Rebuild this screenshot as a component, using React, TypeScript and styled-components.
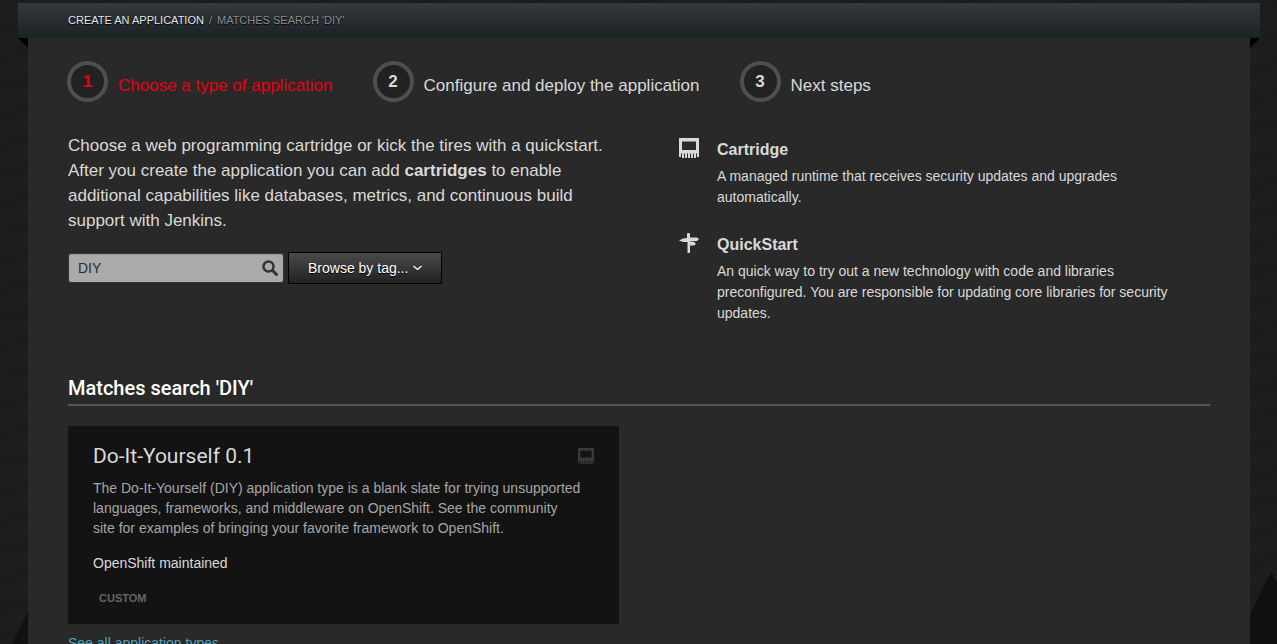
import React from "react";
import styled, { createGlobalStyle } from "styled-components";

const GlobalStyle = createGlobalStyle`
  *, *::before, *::after { box-sizing: border-box; }
  body {
    margin: 0;
    background: #1d1d1d;
    color: #d9d9d9;
    font-family: "Liberation Sans", Arial, sans-serif;
    font-size: 14px;
    line-height: 20px;
  }
  h1, h2, h3, p, ol, ul { margin: 0; padding: 0; }
  ol, ul { list-style: none; }
`;

const Page = styled.div`
  position: relative;
  min-height: 100vh;
  padding: 3px 17px 0 18px;
  background: repeating-linear-gradient(165deg, #1c1c1c 0, #1e1e1e 14px, #1c1c1c 28px);
`;

const Peak = styled.svg<{ $side: "left" | "right" }>`
  position: fixed;
  bottom: 0;
  ${(p) => p.$side}: 0;
`;

const TopBar = styled.header`
  position: relative;
  height: 35px;
  padding: 0 50px 2px;
  display: flex;
  align-items: center;
  background: linear-gradient(#33393c, #1b2224);

  &::before,
  &::after {
    content: "";
    position: absolute;
    top: 100%;
    border-top: 10px solid #000;
  }
  &::before { left: 0; border-left: 10px solid transparent; }
  &::after { right: 0; border-right: 10px solid transparent; }
`;

const Crumbs = styled.ol`
  display: flex;
  gap: 5px;
  font-size: 11px;
  text-transform: uppercase;
  text-shadow: 0 1px 1px #000;
  color: #8c8c8c;
`;

const CrumbLink = styled.a`
  color: #e6e6e6;
  text-decoration: none;
`;

const Panel = styled.main`
  position: relative;
  margin: 0 10px;
  min-height: calc(100vh - 38px);
  padding: 23px 40px 20px;
  background: #292929;
`;

const Steps = styled.ol`
  display: flex;
  gap: 40px;
  margin-left: -1px;
`;

const Step = styled.li<{ $active?: boolean }>`
  display: flex;
  align-items: center;
  gap: 10px;
  font-size: 17px;
  color: ${(p) => (p.$active ? "#e60012" : "#d9d9d9")};
`;

const StepNumber = styled.span`
  width: 41px;
  height: 41px;
  display: grid;
  place-items: center;
  border: 4px solid #4f4f4f;
  border-radius: 50%;
  background: #222;
  font-weight: bold;
`;

const StepLabel = styled.span`
  padding-top: 8px;
`;

const Columns = styled.div`
  display: grid;
  grid-template-columns: 1fr 1fr;
  gap: 40px;
`;

const IntroRow = styled(Columns)`
  padding-top: 31px;
`;

const Intro = styled.p`
  font-size: 17px;
  line-height: 25px;
`;

const Filters = styled.form`
  display: flex;
  align-items: center;
  gap: 4px;
  margin-top: 19px;
`;

const SearchBox = styled.div`
  display: flex;
  align-items: center;
  width: 216px;
  height: 30px;
  border: 1px solid #333;
  border-radius: 3px;
  background: #aaa;
  box-shadow: inset 0 1px 1px #999;
`;

const SearchInput = styled.input`
  flex: 1;
  min-width: 0;
  padding: 0 0 0 9px;
  border: 0;
  outline: 0;
  background: none;
  color: #2b2b2b;
  font: inherit;
`;

const SearchButton = styled.button`
  display: flex;
  padding: 0 5px;
  border: 0;
  background: none;
  color: #333;
`;

const TagButton = styled.button`
  display: flex;
  align-items: center;
  gap: 5px;
  height: 32px;
  padding: 0 19px;
  border: 1px solid #000;
  background: linear-gradient(#4a4a4a, #222);
  color: #fff;
  font: inherit;
  text-shadow: 0 1px 1px #000;
`;

const Kinds = styled.ul`
  padding: 5px 20px 0;
`;

const Kind = styled.li`
  display: flex;
  gap: 18px;
  margin-bottom: 25px;

  > svg { flex: none; }
`;

const KindName = styled.h2`
  margin-bottom: 4px;
  font-size: 16px;
  line-height: 24px;
`;

const KindText = styled.p`
  line-height: 21px;
`;

const SectionTitle = styled.h1`
  margin-top: 24px;
  padding-bottom: 1px;
  border-bottom: 2px solid #555;
  color: #fff;
  font-family: Roboto, sans-serif;
  font-size: 20px;
  font-weight: 500;
  line-height: 30px;
`;

const Results = styled(Columns)`
  margin-top: 20px;
`;

const Card = styled.article`
  padding: 16px 25px;
  background: #131313;
  color: #a6a6a6;
`;

const CardHead = styled.div`
  display: flex;
  align-items: center;
  justify-content: space-between;
  color: #393939;
`;

const CardTitle = styled.h2`
  color: #d9d9d9;
  font-family: Roboto, sans-serif;
  font-size: 21px;
  font-weight: 400;
  line-height: 28px;
`;

const CardText = styled.p`
  margin-top: 8px;
`;

const Maintainer = styled.p`
  margin-top: 15px;
  color: #d9d9d9;
`;

const Tag = styled.span`
  display: block;
  margin-top: 15px;
  padding-left: 6px;
  color: #666;
  font-size: 11px;
  font-weight: bold;
  text-transform: uppercase;
`;

const AllLink = styled.a`
  display: inline-block;
  margin-top: 9px;
  color: #54a3b8;
  text-decoration: none;
`;

const CartridgeIcon = ({ size }: { size: number }) => (
  <svg width={size} height={size} viewBox="0 0 20 20" fill="currentColor" aria-hidden="true">
    <path fillRule="evenodd" d="M0 0H20V19H18V15.500H17V20H15V15.500H14V20H12V15.500H11V20H9V15.500H8V20H6V15.500H5V20H3V15.500H2V19H0ZM3 3.500V12H17V3.500Z" />
  </svg>
);

const SignpostIcon = () => (
  <svg width="20" height="20" viewBox="0 0 20 20" fill="currentColor" aria-hidden="true">
    <path d="M8 0.500L9.500 0L11 0.500V4.500H18L20 6L18 8L11 8.500V9H15L17 11L15 12.500H11V20H8.500V9H4L0 7.500L4 5.500L8 5Z" />
  </svg>
);

const SearchIcon = () => (
  <svg width="16" height="16" viewBox="0 0 16 16" fill="none" stroke="currentColor" aria-hidden="true">
    <circle cx="6.500" cy="6.500" r="5" strokeWidth="2.500" />
    <path d="M10.500 10.500L14.500 14.500" strokeWidth="3" strokeLinecap="round" />
  </svg>
);

const ChevronIcon = () => (
  <svg width="9" height="6" viewBox="0 0 9 6" fill="none" stroke="currentColor" aria-hidden="true">
    <path d="M0.500 1L4.500 4.500L8.500 1" strokeWidth="1.300" />
  </svg>
);

const steps = ["Choose a type of application", "Configure and deploy the application", "Next steps"];

export default function App() {
  return (
    <Page>
      <GlobalStyle />
      <Peak $side="left" width="60" height="97" aria-hidden="true">
        <path d="M12 97L60 0V97Z" fill="#101010" />
      </Peak>
      <Peak $side="right" width="42" height="72" aria-hidden="true">
        <path d="M0 72L36 0L42 11V72Z" fill="#101010" />
      </Peak>
      <TopBar>
        <nav aria-label="Breadcrumb">
          <Crumbs>
            <li><CrumbLink href="#types">Create an application</CrumbLink></li>
            <li aria-hidden="true">/</li>
            <li>Matches search 'DIY'</li>
          </Crumbs>
        </nav>
      </TopBar>
      <Panel>
        <Steps>
          {steps.map((label, i) => (
            <Step key={label} $active={i === 0}>
              <StepNumber>{i + 1}</StepNumber>
              <StepLabel>{label}</StepLabel>
            </Step>
          ))}
        </Steps>
        <IntroRow>
          <div>
            <Intro>
              Choose a web programming cartridge or kick the tires with a quickstart. After you
              create the application you can add <strong>cartridges</strong> to enable additional
              capabilities like databases, metrics, and continuous build support with Jenkins.
            </Intro>
            <Filters>
              <SearchBox>
                <SearchInput type="text" aria-label="Search" defaultValue="DIY" />
                <SearchButton type="button" aria-label="Search"><SearchIcon /></SearchButton>
              </SearchBox>
              <TagButton type="button">Browse by tag... <ChevronIcon /></TagButton>
            </Filters>
          </div>
          <Kinds>
            <Kind>
              <CartridgeIcon size={20} />
              <div>
                <KindName>Cartridge</KindName>
                <KindText>A managed runtime that receives security updates and upgrades automatically.</KindText>
              </div>
            </Kind>
            <Kind>
              <SignpostIcon />
              <div>
                <KindName>QuickStart</KindName>
                <KindText>
                  An quick way to try out a new technology with code and libraries preconfigured.
                  You are responsible for updating core libraries for security updates.
                </KindText>
              </div>
            </Kind>
          </Kinds>
        </IntroRow>
        <SectionTitle>Matches search 'DIY'</SectionTitle>
        <Results>
          <Card>
            <CardHead>
              <CardTitle>Do-It-Yourself 0.1</CardTitle>
              <CartridgeIcon size={16} />
            </CardHead>
            <CardText>
              The Do-It-Yourself (DIY) application type is a blank slate for trying unsupported
              languages, frameworks, and middleware on OpenShift. See the community site&nbsp;for
              examples of bringing your favorite framework to OpenShift.
            </CardText>
            <Maintainer>OpenShift maintained</Maintainer>
            <Tag>Custom</Tag>
          </Card>
        </Results>
        <AllLink href="#all">See all application types</AllLink>
      </Panel>
    </Page>
  );
}
